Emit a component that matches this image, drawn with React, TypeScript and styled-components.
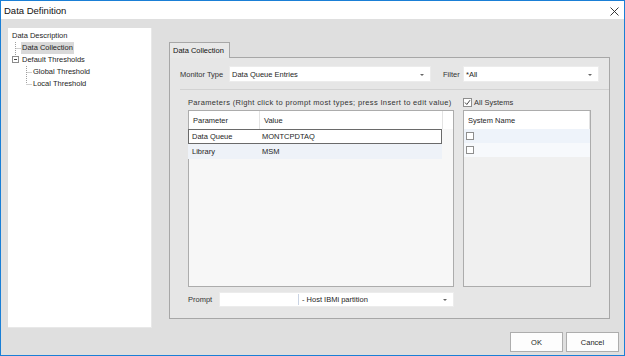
import React from 'react';
import styled, { createGlobalStyle } from 'styled-components';

const GlobalStyle = createGlobalStyle`
  html, body {
    margin: 0;
    padding: 0;
    background: #ffffff;
  }
  * {
    box-sizing: border-box;
  }
  body {
    font-family: 'Liberation Sans', Arial, sans-serif;
    font-size: 7.5px;
    color: #1e1e1e;
  }
`;

const Window = styled.div`
  width: 625px;
  height: 356px;
  border: 1px solid #1a7fd6;
  display: flex;
  flex-direction: column;
  background: #dfdfdf;
`;

const TitleBar = styled.div`
  height: 18px;
  background: #ffffff;
  display: flex;
  align-items: center;
  justify-content: space-between;
  padding: 0 5px 0 3px;
  font-size: 9.5px;
  color: #111;
`;

const CloseButton = styled.span`
  width: 9px;
  height: 9px;
  display: flex;
  margin-top: 2px;
`;

const Main = styled.div`
  display: flex;
  padding: 9px 0 0 7px;
  height: 309px;
`;

const Tree = styled.div`
  width: 144px;
  height: 300px;
  flex-shrink: 0;
  background: #ffffff;
  border-right: 1px solid #e8e8e8;
  border-bottom: 1px solid #e8e8e8;
  padding: 2px 0 0 3px;
`;

const TreeRow = styled.div<{ $level: number }>`
  height: 12px;
  display: flex;
  align-items: center;
  padding-left: ${({ $level }) => $level * 11}px;
  white-space: nowrap;
`;

const TreeLabel = styled.span<{ $selected?: boolean }>`
  height: 12px;
  line-height: 12px;
  padding: 0 1px;
  background: ${({ $selected }) => ($selected ? '#d9d9d9' : 'transparent')};
`;

const TabArea = styled.div`
  margin: 14px 0 0 17px;
  width: 441px;
  flex-shrink: 0;
  display: flex;
  flex-direction: column;
`;

const TabStrip = styled.div`
  display: flex;
  height: 15px;
`;

const Tab = styled.div`
  width: 61px;
  height: 16px;
  border: 1px solid #a7a7a7;
  border-bottom: none;
  background: #e8e8e8;
  padding: 3px 0 0 3px;
  position: relative;
  z-index: 1;
  color: #111;
`;

const Panel = styled.div`
  height: 262px;
  border: 1px solid #a7a7a7;
  background: #e6e6e6;
  padding: 8px 0 0 10px;
  display: flex;
  flex-direction: column;
`;

const FieldRow = styled.div`
  display: flex;
  align-items: center;
  height: 16px;
`;

const FieldLabel = styled.span<{ $width: number; $gap?: number }>`
  width: ${({ $width }) => $width}px;
  margin-left: ${({ $gap }) => $gap ?? 0}px;
  color: #333;
`;

const Dropdown = styled.div<{ $width: number }>`
  width: ${({ $width }) => $width}px;
  height: 16px;
  background: #ffffff;
  border: 1px solid #ececec;
  display: flex;
  align-items: center;
  padding: 0 6px 0 2px;
  justify-content: space-between;
`;

const Caret = styled.span`
  width: 0;
  height: 0;
  border-left: 2px solid transparent;
  border-right: 2px solid transparent;
  border-top: 2px solid #666;
  margin-top: 1px;
`;

const Separator = styled.div`
  height: 1px;
  margin-top: 7px;
  background: #d2d2d2;
`;

const Columns = styled.div`
  display: flex;
  margin: 6px 0 0 8px;
  gap: 9px;
`;

const Column = styled.div<{ $width: number }>`
  width: ${({ $width }) => $width}px;
  display: flex;
  flex-direction: column;
`;

const ColumnLabel = styled.div<{ $spacing?: number }>`
  height: 14px;
  display: flex;
  align-items: center;
  padding-bottom: 2px;
  color: #333;
  white-space: nowrap;
  gap: 2px;
  letter-spacing: ${({ $spacing }) => $spacing ?? 0}px;
`;

const Grid = styled.div<{ $fill: string }>`
  height: 177px;
  border: 1px solid #acacac;
  background: ${({ $fill }) => $fill};
  display: flex;
  flex-direction: column;
`;

const HeaderRow = styled.div`
  height: 18px;
  background: #ffffff;
  display: flex;
  flex-shrink: 0;
`;

const HeaderCell = styled.div<{ $width: number }>`
  width: ${({ $width }) => $width}px;
  border-right: 1px solid #e3e3e3;
  padding: 0 4px;
  display: flex;
  align-items: center;
`;

const DataRow = styled.div<{ $selected?: boolean; $alt?: boolean }>`
  width: 254px;
  height: 15px;
  display: flex;
  align-items: center;
  background: ${({ $alt }) => ($alt ? '#eef2f8' : '#ffffff')};
  border: 1px solid ${({ $selected }) => ($selected ? '#6a6a6a' : 'transparent')};
  margin-left: -1px;
`;

const Cell = styled.div<{ $width: number }>`
  width: ${({ $width }) => $width}px;
  padding-left: 3px;
`;

const SystemRow = styled.div<{ $alt?: boolean }>`
  height: 14px;
  display: flex;
  align-items: center;
  padding-left: 2px;
  background: ${({ $alt }) => ($alt ? '#eef3fa' : '#f7f9fc')};
`;

const CheckBox = styled.span<{ $size: number }>`
  width: ${({ $size }) => $size}px;
  height: ${({ $size }) => $size}px;
  border: 1px solid #8e8e8e;
  background: #ffffff;
  display: inline-flex;
  align-items: center;
  justify-content: center;
`;

const PromptRow = styled.div`
  display: flex;
  align-items: center;
  height: 15px;
  margin: 5px 0 0 8px;
`;

const PromptBox = styled.div`
  width: 235px;
  height: 15px;
  background: #ffffff;
  border: 1px solid #ececec;
  display: flex;
  align-items: center;
  padding: 0 6px 0 2px;
`;

const PromptField = styled.span`
  width: 77px;
  height: 11px;
  border-right: 1px solid #c9d3e3;
  margin-right: 3px;
`;

const PromptText = styled.span`
  flex: 1;
`;

const Footer = styled.div`
  display: flex;
  justify-content: flex-end;
  gap: 3px;
  padding: 4px 5px 0 0;
`;

const Button = styled.button`
  width: 53px;
  height: 20px;
  background: #fdfdfd;
  border: 1px solid #adadad;
  font-family: 'Liberation Sans', Arial, sans-serif;
  font-size: 7.5px;
  color: #1e1e1e;
  padding: 0;
`;

const Guide: React.FC<{ kind: 'tee' | 'end' | 'box' }> = ({ kind }) => (
  <svg width="10" height="12" viewBox="0 0 10 12" style={{ flexShrink: 0 }}>
    {kind === 'box' ? (
      <>
        <line x1="4.5" y1="0" x2="4.5" y2="2.5" stroke="#a0a0a0" strokeDasharray="1 1" />
        <rect x="1.5" y="2.5" width="6" height="6" fill="#fff" stroke="#8c8c8c" />
        <line x1="3" y1="5.5" x2="6" y2="5.5" stroke="#444" />
      </>
    ) : (
      <>
        <line x1="4.5" y1="0" x2="4.5" y2={kind === 'tee' ? 12 : 6} stroke="#a0a0a0" strokeDasharray="1 1" />
        <line x1="4.5" y1="6.5" x2="10" y2="6.5" stroke="#a0a0a0" strokeDasharray="1 1" />
      </>
    )}
  </svg>
);

const Check: React.FC = () => (
  <svg width="7" height="7" viewBox="0 0 7 7">
    <path d="M1 3.5 L2.8 5.5 L6 1.2" fill="none" stroke="#333" strokeWidth="0.9" />
  </svg>
);

const App: React.FC = () => {
  return (
    <>
      <GlobalStyle />
      <Window>
        <TitleBar>
          <span>Data Definition</span>
          <CloseButton>
            <svg width="9" height="9" viewBox="0 0 9 9">
              <path d="M0.5 0.5 L8.5 8.5 M8.5 0.5 L0.5 8.5" stroke="#222" strokeWidth="0.9" />
            </svg>
          </CloseButton>
        </TitleBar>
        <Main>
          <Tree>
            <TreeRow $level={0}>
              <TreeLabel>Data Description</TreeLabel>
            </TreeRow>
            <TreeRow $level={0}>
              <Guide kind="tee" />
              <TreeLabel $selected>Data Collection</TreeLabel>
            </TreeRow>
            <TreeRow $level={0}>
              <Guide kind="box" />
              <TreeLabel>Default Thresholds</TreeLabel>
            </TreeRow>
            <TreeRow $level={1}>
              <Guide kind="tee" />
              <TreeLabel>Global Threshold</TreeLabel>
            </TreeRow>
            <TreeRow $level={1}>
              <Guide kind="end" />
              <TreeLabel>Local Threshold</TreeLabel>
            </TreeRow>
          </Tree>
          <TabArea>
            <TabStrip>
              <Tab>Data Collection</Tab>
            </TabStrip>
            <Panel>
              <FieldRow>
                <FieldLabel $width={49}>Monitor Type</FieldLabel>
                <Dropdown $width={202}>
                  <span>Data Queue Entries</span>
                  <Caret />
                </Dropdown>
                <FieldLabel $width={20} $gap={12}>Filter</FieldLabel>
                <Dropdown $width={136}>
                  <span>*All</span>
                  <Caret />
                </Dropdown>
              </FieldRow>
              <Separator />
              <Columns>
                <Column $width={266}>
                  <ColumnLabel $spacing={0.35}>
                    Parameters (Right click to prompt most types; press Insert to edit value)
                  </ColumnLabel>
                  <Grid $fill="#f7f7f7">
                    <HeaderRow>
                      <HeaderCell $width={71}>Parameter</HeaderCell>
                      <HeaderCell $width={183}>Value</HeaderCell>
                    </HeaderRow>
                    <DataRow $selected>
                      <Cell $width={70}>Data Queue</Cell>
                      <Cell $width={180}>MONTCPDTAQ</Cell>
                    </DataRow>
                    <DataRow $alt>
                      <Cell $width={70}>Library</Cell>
                      <Cell $width={180}>MSM</Cell>
                    </DataRow>
                  </Grid>
                </Column>
                <Column $width={128}>
                  <ColumnLabel>
                    <CheckBox $size={9}>
                      <Check />
                    </CheckBox>
                    All Systems
                  </ColumnLabel>
                  <Grid $fill="#f0f0f0">
                    <HeaderRow>
                      <HeaderCell $width={126}>System Name</HeaderCell>
                    </HeaderRow>
                    <SystemRow $alt>
                      <CheckBox $size={8} />
                    </SystemRow>
                    <SystemRow>
                      <CheckBox $size={8} />
                    </SystemRow>
                  </Grid>
                </Column>
              </Columns>
              <PromptRow>
                <FieldLabel $width={31}>Prompt</FieldLabel>
                <PromptBox>
                  <PromptField />
                  <PromptText>- Host IBMi partition</PromptText>
                  <Caret />
                </PromptBox>
              </PromptRow>
            </Panel>
          </TabArea>
        </Main>
        <Footer>
          <Button>OK</Button>
          <Button>Cancel</Button>
        </Footer>
      </Window>
    </>
  );
};

export default App;
